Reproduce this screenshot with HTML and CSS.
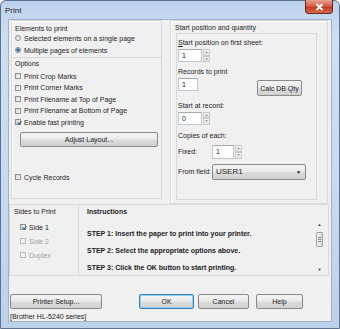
FILE: index.html
```html
<!DOCTYPE html>
<html lang="en">
<head>
  <meta charset="UTF-8">
  <title>Print</title>
  <link rel="stylesheet" href="styles.css">
</head>
<body>

  <div class="window">
    <div class="titlebar">
      <span class="title">Print</span>
      <span class="close">
        <svg width="9" height="8" viewBox="0 0 9 8"><path d="M1.5 1 L7.5 7 M7.5 1 L1.5 7" stroke="#fff" stroke-width="1.8"/></svg>
      </span>
    </div>

    <div class="client">
      <div class="top">
        <div class="panel left-panel">
          <div class="elements">
            <div class="heading">Elements to print</div>
            <div class="opt"><span class="radio"></span>Selected elements on a single page</div>
            <div class="opt"><span class="radio on"></span>Multiple pages of elements</div>
          </div>
          <div class="options">
            <div class="heading">Options</div>
            <div class="checks">
              <div class="opt"><span class="check"></span>Print Crop Marks</div>
              <div class="opt"><span class="check"></span>Print Corner Marks</div>
              <div class="opt"><span class="check"></span>Print Filename at Top of Page</div>
              <div class="opt"><span class="check"></span>Print Filename at Bottom of Page</div>
              <div class="opt"><span class="check on"></span>Enable fast printing</div>
            </div>
            <button class="btn adjust">Adjust Layout...</button>
            <div class="opt cycle"><span class="check"></span>Cycle Records</div>
          </div>
        </div>

        <div class="panel right-panel">
          <div class="heading">Start position and quantity</div>
          <div class="inner">
            <div class="lbl first"><u>S</u>tart position on first sheet:</div>
            <div class="spin w24"><span class="field">1</span><span class="arrows"><i>&#9650;</i><i>&#9660;</i></span></div>
            <div class="lbl">Records to print</div>
            <div class="records-row">
              <span class="field plain">1</span>
              <button class="btn calc">Calc DB Qty</button>
            </div>
            <div class="lbl">Start at record:</div>
            <div class="spin w24"><span class="field">0</span><span class="arrows"><i>&#9650;</i><i>&#9660;</i></span></div>
            <div class="lbl copies">Copies of each:</div>
            <div class="field-row fixed">
              <span class="row-lbl">Fixed:</span>
              <div class="spin w22"><span class="field">1</span><span class="arrows"><i>&#9650;</i><i>&#9660;</i></span></div>
            </div>
            <div class="field-row from">
              <span class="row-lbl">From field:</span>
              <div class="select"><span>USER1</span><span class="caret">&#9660;</span></div>
            </div>
          </div>
        </div>
      </div>

      <div class="bottom">
        <div class="sides">
          <div class="heading">Sides to Print</div>
          <div class="side-list">
            <div class="opt"><span class="check on"></span>Side 1</div>
            <div class="opt off"><span class="check"></span>Side 2</div>
            <div class="opt off"><span class="check"></span>Duplex</div>
          </div>
        </div>
        <div class="instructions">
          <div class="heading bold">Instructions</div>
          <div class="steps-box">
            <div class="steps">
              <div>STEP 1: Insert the paper to print into your printer.</div>
              <div>STEP 2: Select the appropriate options above.</div>
              <div>STEP 3: Click the OK button to start printing.</div>
            </div>
            <div class="scrollbar">
              <span class="sb-arrow">&#9650;</span>
              <span class="thumb"><i></i><i></i><i></i></span>
              <span class="sb-arrow">&#9660;</span>
            </div>
          </div>
        </div>
      </div>

      <div class="actions">
        <button class="btn setup">Printer Setup...</button>
        <button class="btn ok">OK</button>
        <button class="btn cancel">Cancel</button>
        <button class="btn help">Help</button>
      </div>
      <div class="printer">[Brother HL-5240 series]</div>
    </div>
  </div>

</body>
</html>
```

FILE: styles.css
```css
body { margin: 0; font-family: "Liberation Sans", Arial, sans-serif; font-size: 7px; color: #1e1e1e; }
* { box-sizing: border-box; }

.window {
  width: 340px; height: 329px;
  border: 1px solid #5d7390; border-radius: 6px 6px 0 0;
  background: linear-gradient(#bcd2ec, #cfdff2 12%, #c6d9ef 60%, #bcd1ea);
  padding: 0 7px 6px 7px;
  display: flex; flex-direction: column;
}
.titlebar { height: 19px; display: flex; align-items: flex-start; justify-content: space-between; }
.title { font-size: 8px; margin: 5px 0 0 -3px; color: #1e1e1e; }
.close {
  width: 28px; height: 14px; margin: -1px -1px 0 0;
  background: linear-gradient(#e8a493, #d4553d 50%, #c23a1f 55%, #d86a4e);
  border: 1px solid #6b2a20; border-top: none; border-radius: 0 0 4px 4px;
  display: flex; align-items: center; justify-content: center;
}

.client {
  flex: 1; background: #f0f0f0; border: 1px solid #9fb2c8;
  display: flex; flex-direction: column;
}

.heading { line-height: 9px; }
.bold { font-weight: bold; }
.opt { height: 10px; display: flex; align-items: center; gap: 3px; white-space: nowrap; }
.opt.off { color: #a3a3a3; }

.radio, .check {
  width: 6px; height: 6px; flex: none; border: 1px solid #8e8f8f;
  background: linear-gradient(135deg, #d6d6d6, #fbfbfb);
  position: relative;
}
.radio { border-radius: 50%; }
.radio.on::after {
  content: ""; position: absolute; left: 1px; top: 1px; width: 2px; height: 2px;
  border-radius: 50%; background: #1d5a8f; box-shadow: 0 0 1px 1px #4d8fc4;
}
.check.on::after {
  content: ""; position: absolute; left: 1.5px; top: 0; width: 1.5px; height: 3px;
  border: solid #2b4d73; border-width: 0 1px 1px 0; transform: rotate(40deg);
}
.opt.off .check { border-color: #bcbcbc; background: #f4f4f4; }

.btn {
  font-family: inherit; font-size: 7px; color: #1e1e1e; padding: 0;
  border: 1px solid #8a8a8a; border-radius: 2px;
  background: linear-gradient(#f3f3f3, #ebebeb 48%, #dcdcdc 52%, #d1d1d1);
}

/* top area */
.top { display: flex; align-items: flex-start; gap: 8px; padding-left: 2px; }
.panel { border: 1px solid #d9d9d9; box-shadow: inset 1px 1px 0 #fff; }
.left-panel { width: 151px; height: 179px; }
.elements { padding: 2px 0 2px 3px; border-bottom: 1px solid #d9d9d9; display: flex; flex-direction: column; gap: 2px; }
.elements .heading { margin-bottom: -2px; padding-top: 1px; }
.options { padding: 1px 0 0 3px; }
.checks { margin-top: 3px; display: flex; flex-direction: column; gap: 1.5px; }
.adjust { display: block; width: 138px; height: 15px; margin: 5px 0 0 5px; }
.cycle { margin-top: 25px; }

.right-panel { width: 158px; height: 184px; padding: 2px 0 0 4px; }
.inner { margin: 1px 0 0 1px; width: 141px; height: 167px; border: 1px solid #d9d9d9; padding: 3px 0 0 1px; }
.lbl { line-height: 9px; margin-top: 4.5px; }
.lbl.first { margin-top: 1px; }
.lbl.copies { margin-top: 6.5px; }
.spin { display: flex; height: 13px; margin-top: 2px; }
.spin.w24 .field { width: 24px; }
.spin.w22 .field { width: 22px; }
.field {
  height: 100%; background: #fff; border: 1px solid #c3c7cc; border-top-color: #a6a9ae;
  padding-left: 3px; display: flex; align-items: center;
}
.arrows { width: 7px; display: flex; flex-direction: column; margin-left: 1px; }
.arrows i {
  flex: 1; font-style: normal; font-size: 3px; color: #555; display: flex; align-items: center; justify-content: center;
  border: 1px solid #c9c9c9; background: linear-gradient(#f7f7f7, #e4e4e4);
}
.records-row { display: flex; align-items: flex-start; margin-top: 2.5px; }
.field.plain { width: 20px; height: 13px; }
.calc { width: 45px; height: 16px; margin: 2px 0 0 59px; }
.field-row { display: flex; align-items: center; }
.row-lbl { width: 34px; }
.field-row.fixed { margin-top: 4.5px; }
.field-row.fixed .spin { margin-top: 0; height: 14px; }
.field-row.from { margin-top: 5px; }
.select {
  width: 94px; height: 16px; border: 1px solid #8a8a8a; border-radius: 2px;
  background: linear-gradient(#f3f3f3, #ebebeb 48%, #dcdcdc 52%, #d1d1d1);
  display: flex; align-items: center; justify-content: space-between; padding: 0 4px 0 3px; font-size: 8px;
}
.caret { font-size: 5px; color: #111; }

/* bottom area */
.bottom { display: flex; height: 72px; }
.sides { width: 70px; border: 1px solid #d9d9d9; padding: 2px 0 0 4px; }
.side-list { margin: 6px 0 0 6px; display: flex; flex-direction: column; gap: 4px; }
.instructions { width: 250px; border: 1px solid #d9d9d9; border-left: none; display: flex; flex-direction: column; }
.instructions .heading { padding: 2px 0 0 8px; }
.steps-box { flex: 1; margin-top: 3px; display: flex; }
.steps { flex: 1; padding: 6px 0 0 8px; font-weight: bold; line-height: 17px; }
.scrollbar {
  width: 9px; margin-right: 4px; display: flex; flex-direction: column; align-items: center; justify-content: space-between; padding: 3px 0 4px;
}
.sb-arrow { font-size: 4px; color: #333; }
.thumb {
  width: 7px; height: 15px; border: 1px solid #a2a2a2; border-radius: 1px; background: linear-gradient(90deg, #f1f1f1, #dadada);
  display: flex; flex-direction: column; justify-content: center; align-items: center; gap: 1px; margin-bottom: 16px;
}
.thumb i { width: 3px; height: 1px; background: #888; }

.actions { display: flex; margin-top: 18px; padding-left: 1px; }
.actions .btn { height: 15px; }
.setup { width: 92px; }
.ok { width: 55px; margin-left: 37px; border-color: #3c7fb1; box-shadow: inset 0 0 0 1px #8ed0f5; }
.cancel { width: 51px; margin-left: 4px; }
.help { width: 47px; margin-left: 7px; }
.printer { margin: 3px 0 0 1px; line-height: 9px; }
```
